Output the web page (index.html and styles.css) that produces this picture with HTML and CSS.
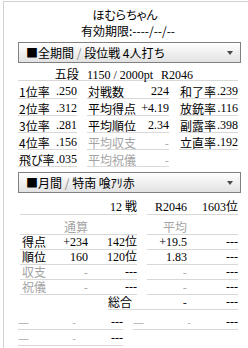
FILE: index.html
```html
<!DOCTYPE html>
<html lang="ja">
<head>
<meta charset="utf-8">
<link rel="stylesheet" href="styles.css">
</head>
<body>
<div class="frame">
  <div class="name">ほむらちゃん</div>
  <div class="expire">有効期限:----/--/--</div>
  <div class="select"><span class="sq">■</span>全期間 <span class="sl">/</span> 段位戦 4人打ち<span class="arrow"></span></div>
  <div class="rank"><span>五段</span><span class="num gap">1150 / 2000pt</span><span class="num gap">R2046</span></div>
  <div class="stats">
    <div class="cell"><span>1位率</span><span class="num">.250</span></div>
    <div class="cell"><span>対戦数</span><span class="num">224</span></div>
    <div class="cell"><span>和了率</span><span class="num">.239</span></div>
    <div class="cell"><span>2位率</span><span class="num">.312</span></div>
    <div class="cell"><span>平均得点</span><span class="num">+4.19</span></div>
    <div class="cell"><span>放銃率</span><span class="num">.116</span></div>
    <div class="cell"><span>3位率</span><span class="num">.281</span></div>
    <div class="cell"><span>平均順位</span><span class="num">2.34</span></div>
    <div class="cell"><span>副露率</span><span class="num">.398</span></div>
    <div class="cell"><span>4位率</span><span class="num">.156</span></div>
    <div class="cell dim"><span>平均収支</span><span>-</span></div>
    <div class="cell"><span>立直率</span><span class="num">.192</span></div>
    <div class="cell"><span class="pt">飛び率</span><span class="num">.035</span></div>
    <div class="cell dim"><span>平均祝儀</span><span>-</span></div>
    <div class="cell empty"></div>
  </div>
  <div class="select s2"><span class="sq">■</span>月間 <span class="sl">/</span> 特南 喰ｱﾘ赤<span class="arrow"></span></div>

  <div class="trow first">
    <div class="l"><span class="lb"></span><span class="ca"></span><span class="cb num">12 戦</span></div>
    <div class="r"><span class="cc num">R2046</span><span class="cd num">1603位</span></div>
  </div>
  <div class="trow head">
    <div class="l"><span class="lb"></span><span class="ca dim">通算</span><span class="cb"></span></div>
    <div class="r"><span class="cc dim">平均</span><span class="cd"></span></div>
  </div>
  <div class="trow">
    <div class="l"><span class="lb">得点</span><span class="ca num">+234</span><span class="cb num">142位</span></div>
    <div class="r"><span class="cc num">+19.5</span><span class="cd num">---</span></div>
  </div>
  <div class="trow">
    <div class="l"><span class="lb">順位</span><span class="ca num">160</span><span class="cb num">120位</span></div>
    <div class="r"><span class="cc num">1.83</span><span class="cd num">---</span></div>
  </div>
  <div class="trow">
    <div class="l"><span class="lb dim">収支</span><span class="ca dim">-</span><span class="cb num">---</span></div>
    <div class="r"><span class="cc dim">-</span><span class="cd num">---</span></div>
  </div>
  <div class="trow">
    <div class="l"><span class="lb dim">祝儀</span><span class="ca dim">-</span><span class="cb num">---</span></div>
    <div class="r"><span class="cc dim">-</span><span class="cd num">---</span></div>
  </div>
  <div class="trow total">
    <span class="tl">総合</span><span class="cc">-</span><span class="cd num">---</span>
  </div>

  <div class="xrow first">
    <div class="x"><span class="xa dim">----</span><span class="xb dim">-</span><span class="xc num">---</span></div>
    <div class="x"><span class="xa dim">----</span><span class="xb dim">-</span><span class="xc num">---</span></div>
  </div>
  <div class="xrow">
    <div class="x"><span class="xa dim">----</span><span class="xb dim">-</span><span class="xc num">---</span></div>
  </div>
</div>
</body>
</html>
```

FILE: styles.css
```css
html, body {
  margin: 0;
  padding: 0;
  background: #fff;
}
body {
  font-family: "Noto Sans CJK JP", sans-serif;
  font-size: 12px;
  color: #000;
  width: 248px;
  height: 348px;
  overflow: hidden;
}
.frame {
  margin: 1px 0 0 3px;
  border-left: 1px solid #d2d2d2;
  border-top: 1px solid #d2d2d2;
  padding: 5px 10px 0 14px;
  height: 347px;
  box-sizing: border-box;
}
.num {
  font-family: "Liberation Serif", "Noto Sans CJK JP", serif;
}
.dim {
  color: #a4a4a4;
}
.pt {
  font-feature-settings: "palt";
}
.name, .expire {
  text-align: center;
  line-height: 16px;
  height: 16px;
}
.name {
  font-feature-settings: "palt";
  padding-right: 6px;
}
.select {
  position: relative;
  margin-top: 3px;
  margin-right: -3px;
  height: 19px;
  line-height: 19px;
  border: 1px solid #808080;
  background: linear-gradient(#ffffff, #e2e2e2);
  padding-left: 7px;
  white-space: nowrap;
}
.select .sq {
  font-size: 12px;
}
.select .sl {
  color: #8a8a8a;
}
.select .arrow {
  position: absolute;
  right: 7px;
  top: 8px;
  width: 0;
  height: 0;
  border-left: 3px solid transparent;
  border-right: 3px solid transparent;
  border-top: 4px solid #4a4a4a;
}
.s2 {
  margin-top: 5px;
}
.rank {
  height: 18px;
  box-sizing: border-box;
  padding-top: 4px;
  padding-right: 8px;
  line-height: 13px;
  text-align: center;
  border-bottom: 1px solid #d8d8d8;
  white-space: nowrap;
}
.rank .gap {
  margin-left: 8px;
}
.stats {
  display: grid;
  grid-template-columns: 59px 82px 59px;
  column-gap: 10px;
  margin-top: 1px;
}
.cell {
  display: flex;
  justify-content: space-between;
  height: 17px;
  box-sizing: border-box;
  padding: 3px 0 0 1px;
  line-height: 13px;
  border-bottom: 1px solid #d8d8d8;
  white-space: nowrap;
}
.cell.empty {
  border-bottom: none;
}
.trow {
  display: flex;
  height: 15px;
  line-height: 14px;
  white-space: nowrap;
}
.trow .l {
  display: flex;
  margin-left: 2px;
  width: 117px;
  border-bottom: 1px solid #d8d8d8;
}
.trow .r {
  display: flex;
  margin-left: 10px;
  width: 91px;
  border-bottom: 1px solid #d8d8d8;
}
.trow.first {
  height: 22px;
}
.trow.first .l, .trow.first .r {
  padding-top: 7px;
}
.trow.head {
  height: 20px;
}
.trow.head .l, .trow.head .r {
  padding-top: 5px;
}
.lb, .ca, .cb, .cc, .cd, .tl, .xa, .xb, .xc {
  flex: none;
  box-sizing: border-box;
}
.lb {
  width: 32px;
  padding-left: 2px;
}
.ca {
  width: 36px;
  text-align: right;
}
.cb {
  width: 49px;
  text-align: right;
}
.cc {
  width: 40px;
  text-align: right;
}
.cd {
  width: 51px;
  text-align: right;
}
.trow.total {
  margin-left: 90px;
  width: 130px;
  height: 14px;
  border-bottom: 1px solid #d8d8d8;
}
.tl {
  width: 39px;
}
.xrow {
  display: flex;
  column-gap: 10px;
  height: 16px;
  line-height: 14px;
  white-space: nowrap;
}
.xrow.first {
  height: 20px;
}
.xrow .x {
  display: flex;
  align-items: flex-end;
  width: 105px;
  border-bottom: 1px solid #d8d8d8;
}
.xa {
  width: 40px;
  font-size: 10px;
  letter-spacing: -1px;
}
.xb {
  width: 18px;
  text-align: right;
  font-size: 10px;
}
.xc {
  width: 47px;
  text-align: right;
}
```
